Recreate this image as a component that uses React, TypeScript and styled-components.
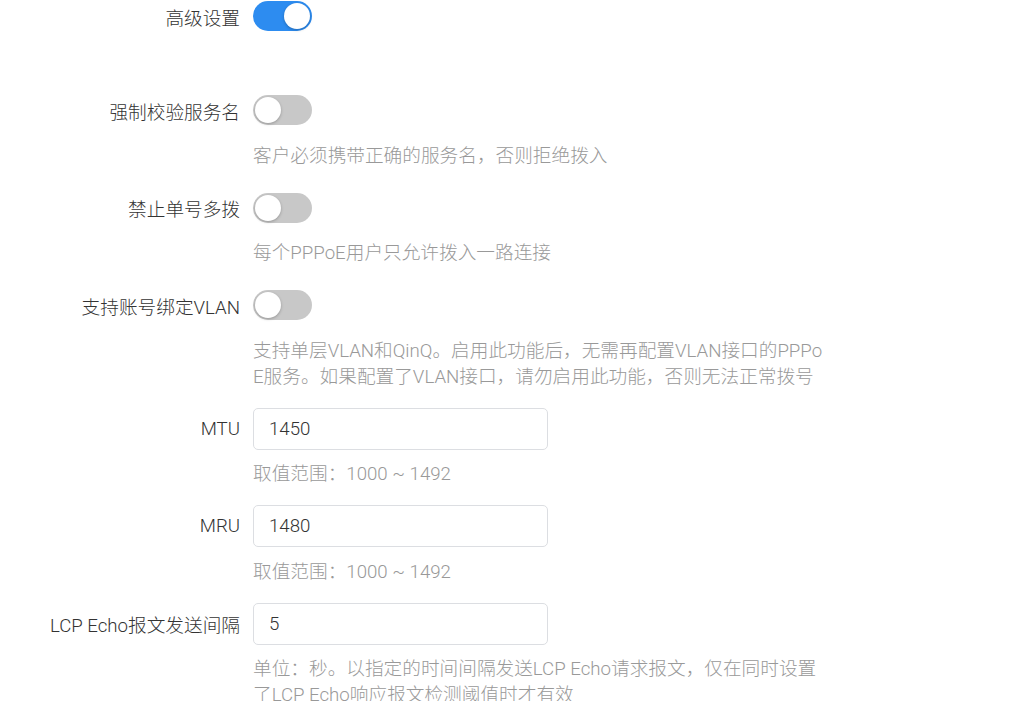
import React from 'react'
import styled, { createGlobalStyle } from 'styled-components'

const GlobalStyle = createGlobalStyle`
  html, body {
    margin: 0;
    padding: 0;
    background: #fff;
  }
  body {
    font-family: Roboto, "Noto Sans CJK SC", sans-serif;
    color: #333;
  }
`

const Form = styled.div`
  display: flex;
  flex-direction: column;
  margin-top: -5px;
`

const Item = styled.div<{ $spaced?: boolean }>`
  display: grid;
  grid-template-columns: 240px 1fr;
  column-gap: 13px;
  margin-bottom: ${(p) => (p.$spaced ? '52px' : '18px')};
`

const Label = styled.label`
  grid-column: 1;
  height: 42px;
  display: flex;
  align-items: center;
  justify-content: flex-end;
  font-size: 18.67px;
  font-weight: 300;
  color: #333;
  white-space: nowrap;
`

const Control = styled.div`
  grid-column: 2;
  height: 42px;
  display: flex;
  align-items: center;
`

const Hint = styled.div`
  grid-column: 2;
  width: 572px;
  margin-top: 11.5px;
  font-size: 18.67px;
  font-weight: 300;
  line-height: 26px;
  color: #999;
  word-break: break-all;
`

const SwitchTrack = styled.span<{ $on?: boolean }>`
  position: relative;
  display: inline-block;
  width: 59px;
  height: 30px;
  border-radius: 15px;
  background: ${(p) => (p.$on ? '#2d8cf0' : '#c8c8c8')};
  box-sizing: border-box;
`

const SwitchKnob = styled.span<{ $on?: boolean }>`
  position: absolute;
  top: 2px;
  left: ${(p) => (p.$on ? '31px' : '2px')};
  width: 26px;
  height: 26px;
  border-radius: 50%;
  background: #fff;
  box-shadow: 0 1px 3px rgba(0, 0, 0, 0.25);
`

const Input = styled.input`
  width: 295px;
  height: 42px;
  box-sizing: border-box;
  padding: 0 15px;
  border: 1px solid #dcdee2;
  border-radius: 5px;
  font-family: Roboto, "Noto Sans CJK SC", sans-serif;
  font-size: 18.67px;
  font-weight: 300;
  color: #333;
  outline: none;
  background: #fff;
`

const Switch: React.FC<{ on?: boolean }> = ({ on }) => (
  <SwitchTrack $on={on}>
    <SwitchKnob $on={on} />
  </SwitchTrack>
)

interface Field {
  label: string
  kind: 'switch' | 'input'
  on?: boolean
  value?: string
  hint?: string
}

const fields: Field[] = [
  {
    label: '强制校验服务名',
    kind: 'switch',
    hint: '客户必须携带正确的服务名，否则拒绝拨入',
  },
  {
    label: '禁止单号多拨',
    kind: 'switch',
    hint: '每个PPPoE用户只允许拨入一路连接',
  },
  {
    label: '支持账号绑定VLAN',
    kind: 'switch',
    hint: '支持单层VLAN和QinQ。启用此功能后，无需再配置VLAN接口的PPPoE服务。如果配置了VLAN接口，请勿启用此功能，否则无法正常拨号',
  },
  { label: 'MTU', kind: 'input', value: '1450', hint: '取值范围：1000 ~ 1492' },
  { label: 'MRU', kind: 'input', value: '1480', hint: '取值范围：1000 ~ 1492' },
  {
    label: 'LCP Echo报文发送间隔',
    kind: 'input',
    value: '5',
    hint: '单位：秒。以指定的时间间隔发送LCP Echo请求报文，仅在同时设置了LCP Echo响应报文检测阈值时才有效',
  },
]

const App: React.FC = () => (
  <>
    <GlobalStyle />
    <Form>
      <Item $spaced>
        <Label>高级设置</Label>
        <Control>
          <Switch on />
        </Control>
      </Item>
      {fields.map((f) => (
        <Item key={f.label}>
          <Label>{f.label}</Label>
          <Control>
            {f.kind === 'switch' ? <Switch on={f.on} /> : <Input defaultValue={f.value} />}
          </Control>
          {f.hint && <Hint>{f.hint}</Hint>}
        </Item>
      ))}
    </Form>
  </>
)

export default App
